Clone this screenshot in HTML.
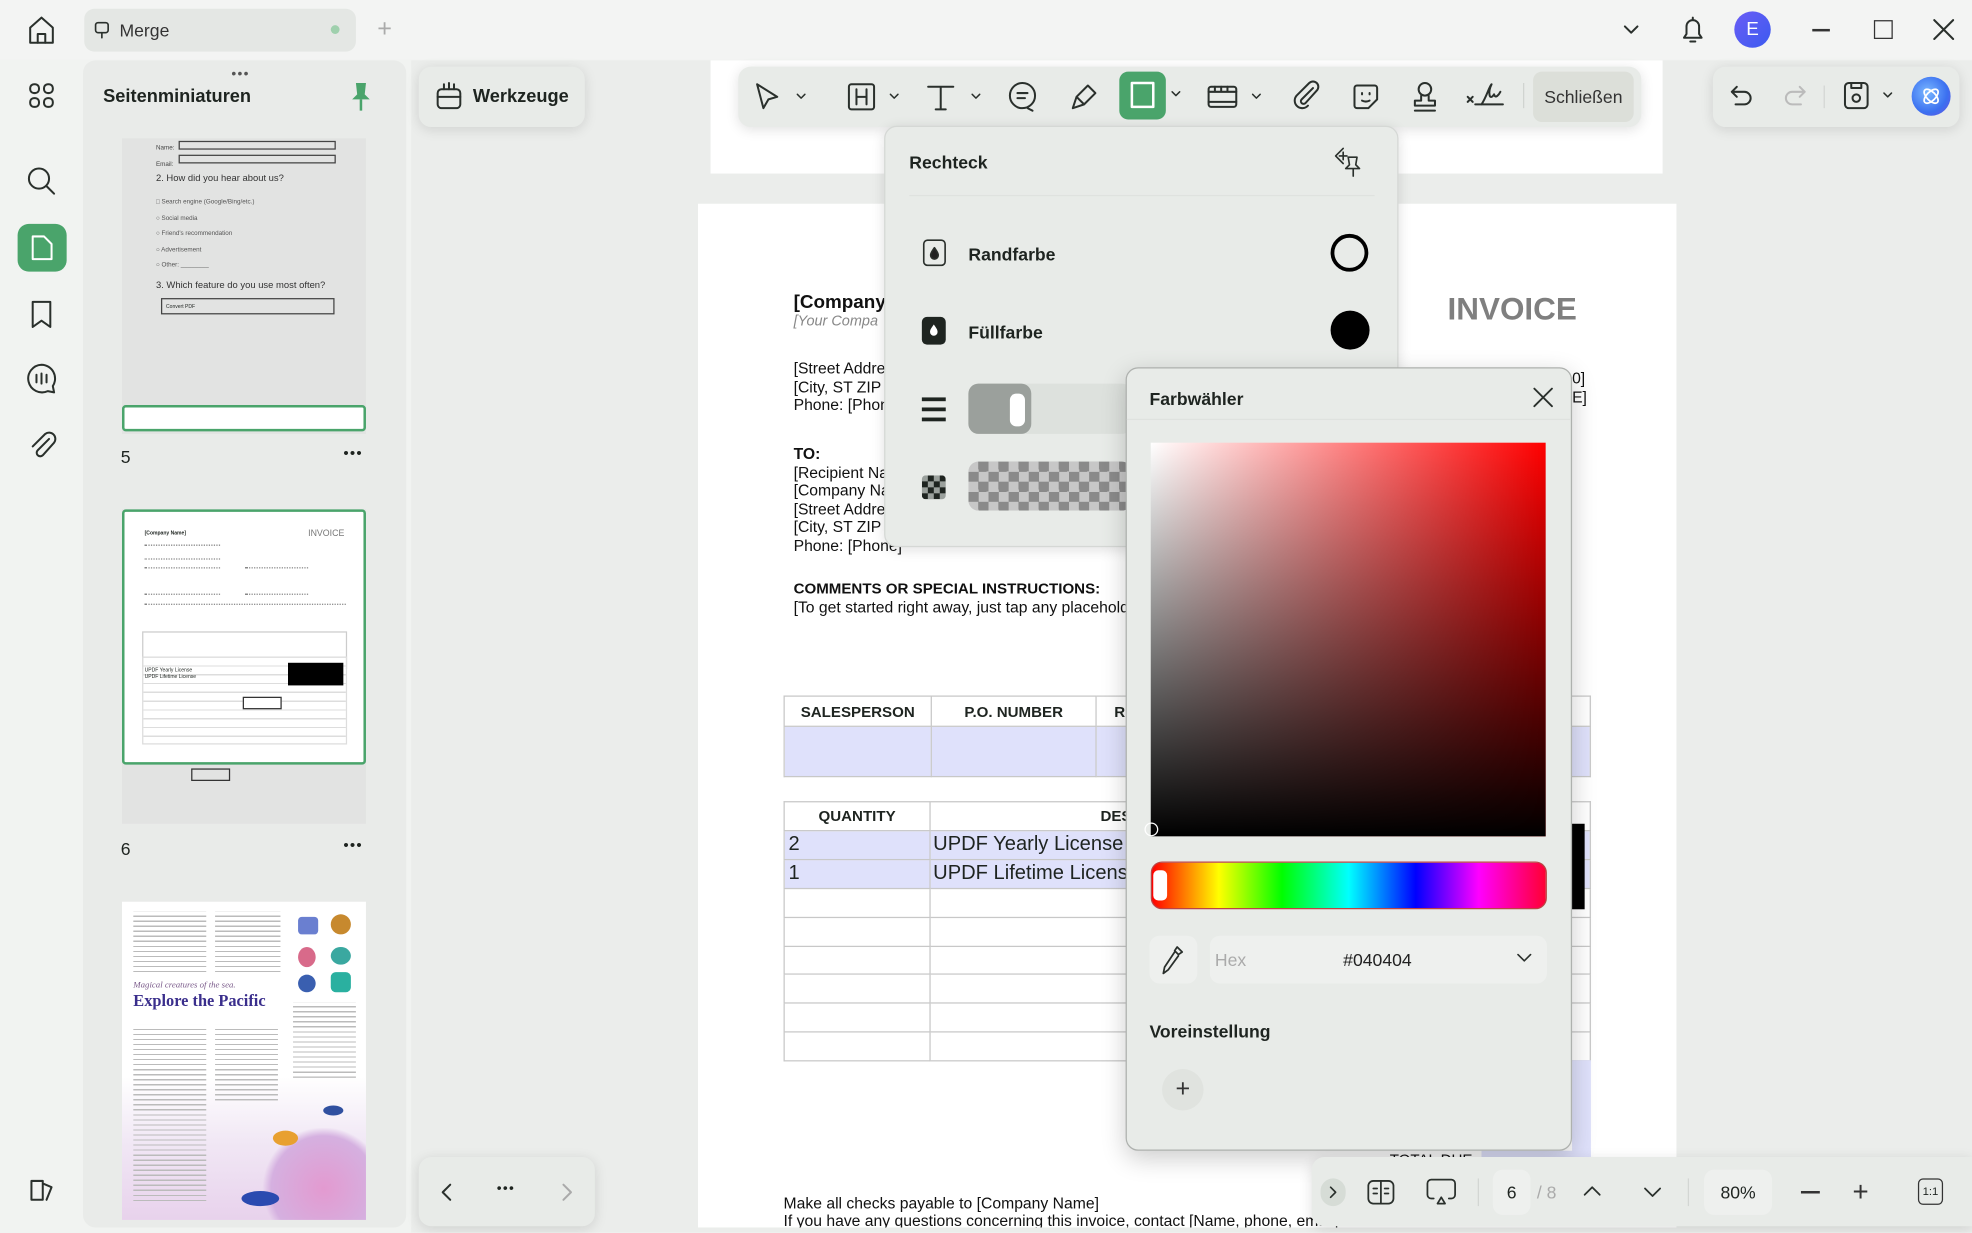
<!DOCTYPE html>
<html><head><meta charset="utf-8"><style>
*{box-sizing:border-box;margin:0;padding:0}
html,body{width:1972px;height:1233px;overflow:hidden;background:#f1f3f1}
#w{position:absolute;left:0;top:0;width:1568px;height:980px;transform:scale(1.25765);transform-origin:0 0;font-family:"Liberation Sans",sans-serif;color:#1e2420;background:#f1f3f1}
.a{position:absolute}
svg.i{position:absolute;fill:none;stroke:#2a302c;stroke-width:1.6;stroke-linecap:round;stroke-linejoin:round}
.t{font-size:12.5px;position:absolute;white-space:nowrap;color:#111}
.pan{background:#e8ebe8;border-radius:10px;box-shadow:0 2px 10px rgba(0,0,0,.12)}
table{border-collapse:collapse;position:absolute;table-layout:fixed}
td{border:1px solid #c8c8c8;font-size:12px;white-space:nowrap;overflow:hidden;line-height:18px;padding:0}
</style></head><body><div id="w">
<!-- top bar -->
<div class="a" style="left:0;top:0;width:1568px;height:47px;background:#f3f4f3"></div>
<svg class="i" style="left:20px;top:11px" width="26" height="26" viewBox="0 0 26 26"><path d="M4 11L13 3l9 8v12H4z"/><path d="M10 23v-7h6v7"/></svg>
<div class="a" style="left:67px;top:7px;width:216px;height:34px;background:#e4e7e4;border-radius:8px"></div>
<svg class="i" style="left:74px;top:16px;stroke-width:1.3" width="14" height="16" viewBox="0 0 14 16"><rect x="2" y="2" width="10" height="8" rx="2"/><path d="M7 10v4"/></svg>
<div class="a" style="left:95px;top:16px;font-size:14px;color:#333">Merge</div>
<div class="a" style="left:263px;top:20px;width:7px;height:7px;border-radius:50%;background:#9fd0ad"></div>
<div class="a" style="left:300px;top:12px;font-size:20px;color:#aaa">+</div>
<svg class="i" style="left:1289px;top:17px" width="16" height="14" viewBox="0 0 16 14"><path d="M3 4l5 5 5-5"/></svg>
<svg class="i" style="left:1335px;top:11px" width="22" height="26" viewBox="0 0 22 26"><path d="M4 19h14l-2-3v-6a5 5 0 0 0-10 0v6z"/><path d="M9 22h4M11 3v2"/></svg>
<div class="a" style="left:1379px;top:9px;width:29px;height:29px;border-radius:50%;background:linear-gradient(135deg,#6a5cf5,#3b5bf0);color:#fff;font-size:15px;text-align:center;line-height:29px">E</div>
<div class="a" style="left:1441px;top:23px;width:14px;height:1.6px;background:#333"></div>
<div class="a" style="left:1490px;top:16px;width:15px;height:15px;border:1.6px solid #333"></div>
<svg class="i" style="left:1537px;top:15px" width="17" height="17" viewBox="0 0 17 17"><path d="M1 1l15 15M16 1L1 16"/></svg>
<!-- left rail -->
<svg class="i" style="left:22px;top:65px" width="22" height="22" viewBox="0 0 22 22"><rect x="2" y="2" width="7" height="7" rx="3"/><rect x="13" y="2" width="7" height="7" rx="3"/><rect x="2" y="13" width="7" height="7" rx="3"/><rect x="13" y="13" width="7" height="7" rx="3"/></svg>
<svg class="i" style="left:21px;top:132px" width="24" height="24" viewBox="0 0 24 24"><circle cx="10" cy="10" r="8"/><path d="M16 16l6 6"/></svg>
<div class="a" style="left:14px;top:178px;width:39px;height:38px;background:#4aa46b;border-radius:9px"></div>
<svg class="i" style="left:22px;top:185px;stroke:#fff" width="22" height="24" viewBox="0 0 22 24"><path d="M4 3h9l6 6v12H4z"/></svg>
<svg class="i" style="left:24px;top:238px" width="18" height="24" viewBox="0 0 18 24"><path d="M2 2h14v20l-7-5-7 5z"/></svg>
<svg class="i" style="left:20px;top:288px" width="26" height="26" viewBox="0 0 26 26"><path d="M13 2a11 11 0 1 0 5 21l5 1-1-5A11 11 0 0 0 13 2z"/><path d="M9 10v6M13 9v8M17 10v6"/></svg>
<svg class="i" style="left:22px;top:341px" width="24" height="26" viewBox="0 0 24 26"><path d="M17 8l-9 9a2.5 2.5 0 0 0 4 4l9-10a5 5 0 0 0-7-7L4 14"/></svg>
<svg class="i" style="left:22px;top:935px" width="22" height="22" viewBox="0 0 22 22"><path d="M3 4h9v15H3zM12 6l7 3-4 10"/></svg>
<!-- sidebar -->
<div class="a" style="left:66px;top:48px;width:257px;height:928px;background:#e9ebe9;border-radius:10px"></div>
<div class="a" style="left:184px;top:53px;font-size:11px;color:#555;letter-spacing:1px">•••</div>
<div class="a" style="left:82px;top:69px;font-size:14.5px;font-weight:bold">Seitenminiaturen</div>
<svg class="a" style="left:278px;top:64px" width="18" height="26" viewBox="0 0 18 26"><path d="M5 2h8l-1 9 4 4H2l4-4z" fill="#4aa46b"/><path d="M9 15v9" stroke="#4aa46b" stroke-width="2"/></svg>
<div class="a" style="left:97px;top:110px;width:194px;height:235px;background:#e2e3e2"></div>
<div class="a" style="left:124px;top:112px;font-size:5px;color:#444;line-height:13px">Name:<br>Email:</div>
<div class="a" style="left:142px;top:112px;width:125px;height:7px;border:1px solid #444"></div>
<div class="a" style="left:142px;top:123px;width:125px;height:7px;border:1px solid #444"></div>
<div class="a" style="left:124px;top:137px;font-size:7.5px;color:#333">2. How did you hear about us?</div>
<div class="a" style="left:124px;top:155px;font-size:5px;color:#555;line-height:12.5px">□ Search engine (Google/Bing/etc.)<br>○ Social media<br>○ Friend's recommendation<br>○ Advertisement<br>○ Other: ________</div>
<div class="a" style="left:124px;top:222px;font-size:7.5px;color:#333">3. Which feature do you use most often?</div>
<div class="a" style="left:128px;top:237px;width:138px;height:13px;border:1px solid #444;font-size:4px;padding:3px">Convert PDF</div>
<div class="a" style="left:97px;top:322px;width:194px;height:21px;border:2.5px solid #4aa46b;border-radius:3px;background:#fff"></div>
<div class="a" style="left:96px;top:355px;font-size:14px">5</div>
<div class="a" style="left:273px;top:353px;font-size:12px;letter-spacing:1px">•••</div>
<div class="a" style="left:97px;top:405px;width:194px;height:250px;background:#e2e3e2"></div>
<div class="a" style="left:97px;top:405px;width:194px;height:203px;border:2.5px solid #4aa46b;border-radius:3px;background:#fff;overflow:hidden">
 <div class="a" style="left:16px;top:14px;font-size:4px;font-weight:bold">[Company Name]</div>
 <div class="a" style="left:146px;top:14px;font-size:7px;color:#777">INVOICE</div>
 <div class="a" style="left:16px;top:26px;width:60px;height:12px;border-top:1px dotted #888;border-bottom:1px dotted #888"></div>
 <div class="a" style="left:16px;top:44px;width:60px;height:22px;border-top:1px dotted #888;border-bottom:1px dotted #888"></div>
 <div class="a" style="left:96px;top:44px;width:50px;height:22px;border-top:1px dotted #888;border-bottom:1px dotted #888"></div>
 <div class="a" style="left:16px;top:73px;width:160px;height:5px;border-top:1px dotted #888"></div>
 <div class="a" style="left:14px;top:95px;width:163px;height:30px;border:1px solid #ccc"></div>
 <div class="a" style="left:14px;top:115px;width:163px;height:70px;border:1px solid #ddd;background:repeating-linear-gradient(#fff 0 6px,#ddd 6px 7px)"></div>
 <div class="a" style="left:16px;top:123px;font-size:4px">UPDF Yearly License<br>UPDF Lifetime License</div>
 <div class="a" style="left:130px;top:120px;width:44px;height:18px;background:#000"></div>
 <div class="a" style="left:94px;top:147px;width:31px;height:10px;border:1px solid #333;background:#fff"></div>
</div>
<div class="a" style="left:152px;top:611px;width:31px;height:10px;border:1px solid #333"></div>
<div class="a" style="left:96px;top:667px;font-size:14px">6</div>
<div class="a" style="left:273px;top:665px;font-size:12px;letter-spacing:1px">•••</div>
<div class="a" style="left:97px;top:717px;width:194px;height:253px;background:linear-gradient(180deg,#fff 0,#fff 55%,#f1e8f5 75%,#e8d2ec 100%);overflow:hidden">
 <div class="a" style="left:9px;top:62px;font-size:7px;font-style:italic;color:#7a5a8a;font-family:'Liberation Serif',serif">Magical creatures of the sea.</div>
 <div class="a" style="left:9px;top:71px;font-size:13px;font-weight:bold;color:#3a2e8c;font-family:'Liberation Serif',serif">Explore the Pacific</div>
 <div class="a" style="left:9px;top:8px;width:58px;height:50px;background:repeating-linear-gradient(#fff 0 3px,#bbb 3px 4px)"></div>
 <div class="a" style="left:74px;top:8px;width:52px;height:50px;background:repeating-linear-gradient(#fff 0 3px,#bbb 3px 4px)"></div>
 <div class="a" style="left:9px;top:98px;width:58px;height:140px;background:repeating-linear-gradient(#fff0 0 3px,#bbb 3px 4px)"></div>
 <div class="a" style="left:74px;top:98px;width:50px;height:60px;background:repeating-linear-gradient(#fff0 0 3px,#bbb 3px 4px)"></div>
 <div class="a" style="left:136px;top:80px;width:50px;height:60px;background:repeating-linear-gradient(#fff0 0 3px,#bbb 3px 4px)"></div>
 <div class="a" style="left:140px;top:12px;width:16px;height:14px;background:#6a7fd0;border-radius:3px"></div>
 <div class="a" style="left:166px;top:10px;width:16px;height:16px;background:#c7892e;border-radius:50%"></div>
 <div class="a" style="left:140px;top:36px;width:14px;height:16px;background:#d86a8a;border-radius:50%"></div>
 <div class="a" style="left:166px;top:36px;width:16px;height:14px;background:#3aa8a0;border-radius:50%"></div>
 <div class="a" style="left:140px;top:58px;width:14px;height:14px;background:#3a5fb0;border-radius:50%"></div>
 <div class="a" style="left:166px;top:56px;width:16px;height:16px;background:#2ab0a0;border-radius:4px"></div>
 <div class="a" style="left:110px;top:180px;width:84px;height:80px;background:radial-gradient(circle at 60% 60%,#e39ad0,#d5b0e0 60%,transparent 70%)"></div>
 <div class="a" style="left:95px;top:230px;width:30px;height:12px;background:#2a4ab0;border-radius:50%"></div>
 <div class="a" style="left:120px;top:182px;width:20px;height:12px;background:#e8a030;border-radius:50%"></div>
 <div class="a" style="left:160px;top:162px;width:16px;height:8px;background:#3050a0;border-radius:50%"></div>
</div>
<!-- main area -->
<div class="a" style="left:327px;top:48px;width:1241px;height:932px;background:#ebedeb"></div>
<div class="a" style="left:565px;top:48px;width:757px;height:90px;background:#fff"></div>
<div class="a" style="left:555px;top:162px;width:778px;height:818px;background:#fff"></div>
<!-- invoice content -->
<div class="t" style="left:631px;top:232px;font-size:15px;font-weight:bold">[Company</div>
<div class="t" style="left:631px;top:250px;font-style:italic;color:#888;font-size:11.5px">[Your Compa</div>
<div class="t" style="left:631px;top:286px;line-height:14.5px">[Street Addre<br>[City, ST ZIP<br>Phone: [Phon</div>
<div class="t" style="left:631px;top:354px;line-height:14.5px"><b>TO:</b><br>[Recipient Na<br>[Company Na<br>[Street Addre<br>[City, ST ZIP<br>Phone: [Phone]</div>
<div class="t" style="left:1151px;top:232px;font-size:25px;font-weight:bold;color:#7f7f7f">INVOICE</div>
<div class="t" style="left:1250px;top:294px;line-height:14.5px">0]<br>E]</div>
<div class="t" style="left:631px;top:461px;font-weight:bold;font-size:12px">COMMENTS OR SPECIAL INSTRUCTIONS:</div>
<div class="t" style="left:631px;top:476px">[To get started right away, just tap any placeholde</div>
<table style="left:623px;top:553px;width:642px">
<colgroup><col style="width:117px"><col style="width:131px"><col></colgroup>
<tr style="height:24px"><td style="text-align:center;font-weight:bold">SALESPERSON</td><td style="text-align:center;font-weight:bold">P.O. NUMBER</td><td style="padding-left:14px;font-weight:bold">R</td></tr>
<tr style="height:40px;background:#dfe1fb"><td></td><td></td><td></td></tr></table>
<table style="left:623px;top:637px;width:642px">
<colgroup><col style="width:116px"><col style="width:400px"><col></colgroup>
<tr style="height:23px"><td style="text-align:center;font-weight:bold">QUANTITY</td><td style="padding-left:135px;font-weight:bold">DES</td><td></td></tr>
<tr style="height:23px;background:#dfe1fb"><td style="font-size:16px;padding-left:3px">2</td><td style="font-size:16px;padding-left:2px">UPDF Yearly License</td><td></td></tr>
<tr style="height:23px;background:#dfe1fb"><td style="font-size:16px;padding-left:3px">1</td><td style="font-size:16px;padding-left:2px">UPDF Lifetime License</td><td></td></tr>
<tr style="height:23px"><td></td><td></td><td></td></tr><tr style="height:23px"><td></td><td></td><td></td></tr><tr style="height:22px"><td></td><td></td><td></td></tr><tr style="height:23px"><td></td><td></td><td></td></tr><tr style="height:23px"><td></td><td></td><td></td></tr><tr style="height:23px"><td></td><td></td><td></td></tr></table>
<div class="a" style="left:1250px;top:655px;width:10px;height:68px;background:#000"></div>
<div class="a" style="left:1250px;top:843px;width:15px;height:80px;background:#dfe1fb"></div>
<div class="a" style="left:1178px;top:915px;width:87px;height:10px;background:#dfe1fb"></div>
<div class="t" style="left:1105px;top:915px;font-size:12px">TOTAL DUE</div>
<div class="t" style="left:623px;top:950px">Make all checks payable to [Company Name]</div>
<div class="t" style="left:623px;top:964px">If you have any questions concerning this invoice, contact [Name, phone, email]</div>
<div class="a" style="left:327px;top:976px;width:1241px;height:4px;background:#ebedeb"></div>
<!-- Werkzeuge -->
<div class="a pan" style="left:333px;top:53px;width:132px;height:48px"></div>
<svg class="i" style="left:345px;top:63px" width="24" height="26" viewBox="0 0 24 26"><rect x="3" y="8" width="18" height="15" rx="3"/><path d="M8 8V4M12 8V3M16 8V4M3 14h18"/></svg>
<div class="a" style="left:376px;top:69px;font-size:14.5px;font-weight:bold">Werkzeuge</div>
<!-- toolbar -->
<div class="a pan" style="left:587px;top:53px;width:718px;height:48px"></div>
<svg class="i" style="left:598px;top:64px" width="48" height="26" viewBox="0 0 48 26"><path d="M4 3l16 10-7 2-4 7z"/><path d="M36 11l3 3 3-3" stroke-width="1.2"/></svg>
<svg class="i" style="left:672px;top:64px" width="48" height="26" viewBox="0 0 48 26"><rect x="3" y="3" width="20" height="20" rx="2"/><path d="M9 7v12M17 7v12M9 13h8"/><path d="M36 11l3 3 3-3" stroke-width="1.2"/></svg>
<svg class="i" style="left:735px;top:64px" width="48" height="26" viewBox="0 0 48 26"><path d="M3 5h20M13 5v18M9 23h8"/><path d="M38 11l3 3 3-3" stroke-width="1.2"/></svg>
<svg class="i" style="left:800px;top:64px" width="26" height="26" viewBox="0 0 26 26"><circle cx="13" cy="12" r="10"/><path d="M9 10h8M9 14h6M17 22l4 2"/></svg>
<svg class="i" style="left:849px;top:64px" width="26" height="26" viewBox="0 0 26 26"><path d="M4 22l3-9 9-9 6 6-9 9zM7 13l6 6"/></svg>
<div class="a" style="left:890px;top:57px;width:37px;height:38px;background:#4aa46b;border-radius:7px"></div>
<div class="a" style="left:899px;top:65px;width:19px;height:21px;border:2px solid #fff;border-radius:1px"></div>
<svg class="i" style="left:930px;top:70px;stroke-width:1.2" width="12" height="10" viewBox="0 0 12 10"><path d="M2 3l3 3 3-3"/></svg>
<svg class="i" style="left:958px;top:64px" width="50" height="26" viewBox="0 0 50 26"><rect x="3" y="5" width="22" height="16" rx="2"/><path d="M3 9h22M3 17h22M8 5v3M13 5v3M18 5v3"/><path d="M38 11l3 3 3-3" stroke-width="1.2"/></svg>
<svg class="i" style="left:1026px;top:64px" width="26" height="26" viewBox="0 0 26 26"><path d="M18 6l-9 9a2 2 0 0 0 3 3l9-10a4 4 0 0 0-6-6L5 12a6 6 0 0 0 9 8"/></svg>
<svg class="i" style="left:1073px;top:64px" width="26" height="26" viewBox="0 0 26 26"><path d="M4 6a2 2 0 0 1 2-2h14a2 2 0 0 1 2 2v9l-7 7H6a2 2 0 0 1-2-2z"/><path d="M10 10v1M16 10v1M10 16c2 1 4 1 6 0"/></svg>
<svg class="i" style="left:1120px;top:63px" width="26" height="28" viewBox="0 0 26 28"><circle cx="13" cy="8" r="5"/><path d="M10 13v4H5v4h16v-4h-5v-4M5 25h16"/></svg>
<svg class="i" style="left:1164px;top:63px" width="34" height="28" viewBox="0 0 34 28"><path d="M3 14l4 4M7 14l-4 4M9 20h22M14 20c4-6 6-14 8-16-3 6-2 14 2 8 1 4 4 0 5-2"/></svg>
<div class="a" style="left:1211px;top:66px;width:1px;height:20px;background:#cfd3cf"></div>
<div class="a" style="left:1219px;top:57px;width:80px;height:40px;background:#dcdfd9;border-radius:7px;font-size:14px;color:#333;text-align:center;line-height:40px">Schließen</div>
<!-- right toolbar -->
<div class="a pan" style="left:1362px;top:53px;width:196px;height:48px"></div>
<svg class="i" style="left:1373px;top:64px" width="24" height="24" viewBox="0 0 24 24"><path d="M8 5L4 9l4 4M4 9h10a5 5 0 0 1 0 10H7"/></svg>
<svg class="i" style="left:1415px;top:64px;stroke:#bbb" width="24" height="24" viewBox="0 0 24 24"><path d="M16 5l4 4-4 4M20 9H10a5 5 0 0 0 0 10h7"/></svg>
<div class="a" style="left:1450px;top:68px;width:1px;height:18px;background:#d3d6d3"></div>
<svg class="i" style="left:1464px;top:63px" width="24" height="26" viewBox="0 0 24 26"><rect x="3" y="3" width="18" height="20" rx="3"/><path d="M8 3v4h8V3"/><circle cx="12" cy="15" r="3"/></svg>
<svg class="i" style="left:1496px;top:71px;stroke-width:1.2" width="12" height="10" viewBox="0 0 12 10"><path d="M2 3l3 3 3-3"/></svg>
<div class="a" style="left:1520px;top:61px;width:31px;height:31px;border-radius:50%;background:radial-gradient(circle at 40% 40%,#7ab8ff,#3b70f0 60%,#6a4ee0)"></div>
<svg class="i" style="left:1526px;top:67px;stroke:#fff;stroke-width:1.4" width="19" height="19" viewBox="0 0 19 19"><ellipse cx="9.5" cy="9.5" rx="7" ry="3.5" transform="rotate(45 9.5 9.5)"/><ellipse cx="9.5" cy="9.5" rx="7" ry="3.5" transform="rotate(-45 9.5 9.5)"/></svg>
<!-- Rechteck panel -->
<div class="a pan" style="left:703px;top:100px;width:409px;height:335px;border:1px solid #d5d8d5"></div>
<div class="a" style="left:723px;top:121px;font-size:14px;font-weight:bold">Rechteck</div>
<svg class="i" style="left:1060px;top:116px;stroke-width:1.3" width="28" height="26" viewBox="0 0 28 26"><path d="M8 2l-6 6 6 6M5 8h6M8 5v6"/><path d="M12 9h7l-1 6 3 3H10l3-3zM16 18v6"/></svg>
<div class="a" style="left:723px;top:155px;width:370px;height:1px;background:#dfe2df"></div>
<svg class="i" style="left:733px;top:189px;stroke-width:1.3" width="20" height="24" viewBox="0 0 20 24"><rect x="1.5" y="2" width="17" height="20" rx="3"/><path d="M10 8c-2 3-3 4-3 6a3 3 0 0 0 6 0c0-2-1-3-3-6z" fill="#222"/></svg>
<div class="a" style="left:770px;top:194px;font-size:14px;font-weight:bold">Randfarbe</div>
<div class="a" style="left:1058px;top:186px;width:30px;height:30px;border:3px solid #000;border-radius:50%"></div>
<div class="a" style="left:733px;top:252px;width:19px;height:22px;background:#1e2420;border-radius:4px"></div>
<svg class="a" style="left:733px;top:252px" width="19" height="22" viewBox="0 0 19 22"><path d="M9.5 6c-2 3-3 4-3 6a3 3 0 0 0 6 0c0-2-1-3-3-6z" fill="#fff"/></svg>
<div class="a" style="left:770px;top:256px;font-size:14px;font-weight:bold">Füllfarbe</div>
<div class="a" style="left:1058px;top:247px;width:31px;height:31px;background:#000;border-radius:50%"></div>
<div class="a" style="left:733px;top:316px;width:19px;height:3px;background:#1e2420;box-shadow:0 8px 0 #1e2420,0 16px 0 #1e2420"></div>
<div class="a" style="left:770px;top:305px;width:130px;height:40px;background:#dde1dd;border-radius:8px"></div>
<div class="a" style="left:770px;top:305px;width:50px;height:40px;background:#9ba09c;border-radius:8px"></div>
<div class="a" style="left:803px;top:313px;width:12px;height:26px;background:#fff;border-radius:5px"></div>
<div class="a" style="left:733px;top:378px;width:19px;height:19px;background:repeating-conic-gradient(#1e2420 0 25%,#9aa09c 0 50%) 0 0/9.5px 9.5px;border-radius:3px"></div>
<div class="a" style="left:770px;top:367px;width:130px;height:39px;border-radius:8px;background:repeating-conic-gradient(#8a8a8a 0 25%,#c7c7c7 0 50%) 0 0/16px 16px"></div>
<!-- Farbwähler -->
<div class="a" style="left:895px;top:292px;width:355px;height:623px;background:#e8ebe8;border:1px solid #aeb1ae;border-radius:10px;box-shadow:0 6px 20px rgba(0,0,0,.2)"></div>
<div class="a" style="left:914px;top:309px;font-size:14px;font-weight:bold">Farbwähler</div>
<svg class="i" style="left:1219px;top:308px;stroke-width:1.5" width="16" height="16" viewBox="0 0 16 16"><path d="M1 1l14 14M15 1L1 15"/></svg>
<div class="a" style="left:896px;top:333px;width:353px;height:1px;background:#dfe2df"></div>
<div class="a" style="left:915px;top:352px;width:314px;height:313px;background:linear-gradient(to top,#000,rgba(0,0,0,0)),linear-gradient(to right,#fff,#f00)"></div>
<div class="a" style="left:910px;top:654px;width:11px;height:11px;border:1.5px solid #fff;border-radius:50%"></div>
<div class="a" style="left:915px;top:685px;width:315px;height:38px;border-radius:9px;border:1px solid #b44;background:linear-gradient(to right,#f00,#ff0 17%,#0f0 33%,#0ff 50%,#00f 67%,#f0f 83%,#f03)"></div>
<div class="a" style="left:917px;top:692px;width:11px;height:24px;background:#fff;border-radius:4px"></div>
<div class="a" style="left:914px;top:744px;width:38px;height:38px;background:#eef0ee;border-radius:8px"></div>
<svg class="i" style="left:922px;top:750px;stroke-width:1.4" width="22" height="26" viewBox="0 0 22 26"><path d="M14 3l4 4-3 2-3-3zM12 7l-8 12-1 5 4-3 8-11"/></svg>
<div class="a" style="left:962px;top:744px;width:268px;height:38px;background:#eef0ee;border-radius:8px"></div>
<div class="a" style="left:966px;top:755px;font-size:14px;color:#aaa">Hex</div>
<div class="a" style="left:1068px;top:755px;font-size:14px;color:#222">#040404</div>
<svg class="i" style="left:1205px;top:756px;stroke-width:1.3" width="14" height="12" viewBox="0 0 14 12"><path d="M2 3l5 5 5-5"/></svg>
<div class="a" style="left:914px;top:812px;font-size:14px;font-weight:bold">Voreinstellung</div>
<div class="a" style="left:924px;top:850px;width:33px;height:33px;border-radius:50%;background:#e0e3df;font-size:20px;text-align:center;line-height:32px;color:#333">+</div>
<!-- bottom left nav -->
<div class="a pan" style="left:333px;top:920px;width:140px;height:55px"></div>
<svg class="i" style="left:347px;top:939px" width="16" height="18" viewBox="0 0 16 18"><path d="M11 3l-6 6 6 6"/></svg>
<div class="a" style="left:395px;top:939px;font-size:11px;letter-spacing:1px">•••</div>
<svg class="i" style="left:443px;top:939px;stroke:#aaa" width="16" height="18" viewBox="0 0 16 18"><path d="M5 3l6 6-6 6"/></svg>
<!-- bottom bar -->
<div class="a pan" style="left:1043px;top:920px;width:525px;height:55px;border-radius:10px 0 0 10px"></div>
<div class="a" style="left:1050px;top:937px;width:20px;height:22px;border-radius:10px;background:#d6dcd6"></div>
<svg class="i" style="left:1054px;top:941px;stroke-width:1.3" width="12" height="14" viewBox="0 0 12 14"><path d="M4 3l4 4-4 4"/></svg>
<svg class="i" style="left:1086px;top:936px;stroke-width:1.4" width="24" height="24" viewBox="0 0 24 24"><rect x="2" y="3" width="20" height="18" rx="4"/><path d="M12 3v18M6 9h3M6 13h3M15 9h3M15 13h3"/></svg>
<svg class="i" style="left:1132px;top:935px;stroke-width:1.4" width="28" height="26" viewBox="0 0 28 26"><path d="M8 18H6a3 3 0 0 1-3-3V6a3 3 0 0 1 3-3h16a3 3 0 0 1 3 3v9a3 3 0 0 1-3 3h-2"/><path d="M14 17l-3 5h6z"/></svg>
<div class="a" style="left:1175px;top:937px;width:1px;height:22px;background:#d3d6d3"></div>
<div class="a" style="left:1187px;top:930px;width:30px;height:36px;background:#eef0ee;border-radius:8px;font-size:14px;text-align:center;line-height:36px">6</div>
<div class="a" style="left:1222px;top:940px;font-size:14px;color:#aaa">/ 8</div>
<svg class="i" style="left:1258px;top:940px;stroke-width:1.4" width="16" height="14" viewBox="0 0 16 14"><path d="M2 10l6-6 6 6"/></svg>
<svg class="i" style="left:1306px;top:941px;stroke-width:1.4" width="16" height="14" viewBox="0 0 16 14"><path d="M2 4l6 6 6-6"/></svg>
<div class="a" style="left:1342px;top:937px;width:1px;height:22px;background:#d3d6d3"></div>
<div class="a" style="left:1355px;top:930px;width:54px;height:36px;background:#eef0ee;border-radius:8px;font-size:14px;text-align:center;line-height:36px">80%</div>
<div class="a" style="left:1432px;top:947px;width:15px;height:1.5px;background:#333"></div>
<div class="a" style="left:1473px;top:938px;font-size:22px;color:#333;line-height:20px">+</div>
<div class="a" style="left:1525px;top:937px;width:20px;height:21px;border:1.5px solid #333;border-radius:4px;font-size:9px;text-align:center;line-height:18px">1:1</div>
</div></body></html>
